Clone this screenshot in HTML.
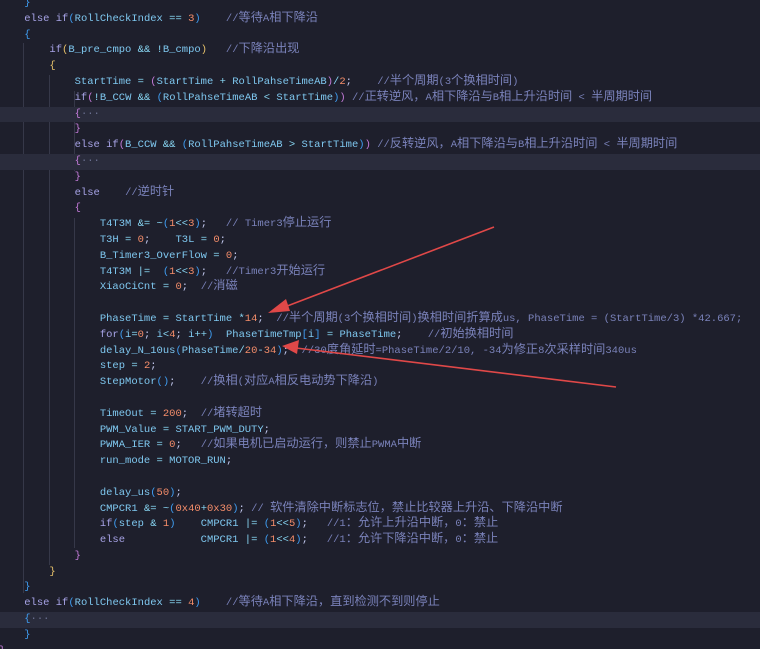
<!DOCTYPE html>
<html><head><meta charset="utf-8"><style>
html,body{margin:0;padding:0;background:#1e1f2c;width:760px;height:649px;overflow:hidden;position:relative}
#code{position:absolute;left:-1px;top:-4px;font-family:"Liberation Mono","Noto Sans CJK SC",monospace;font-size:10.5px;line-height:15.8px;color:#7fc8f0}
.l{height:15.8px;white-space:pre}
.hl{background:#2a2c3c;width:800px;margin-left:0}
.k{color:#a7a3e6}.o{color:#89d8f5}.n{color:#f48d6a}.c{color:#7a82ba}.p{color:#c2c8ee}
.b1{color:#3f9cf0}.b2{color:#e5c06a}.b3{color:#c27ad8}.d{color:#6b7090}
.z{font-size:12.2px;line-height:10px}
.g{position:absolute;width:1px;background:#363849}
</style></head><body>
<div class="g" style="left:23px;top:43px;height:550px"></div>
<div class="g" style="left:49px;top:75px;height:490px"></div>
<div class="g" style="left:74px;top:91px;height:80px"></div>
<div class="g" style="left:74px;top:218px;height:330px"></div>
<div id="code"><div class="l">    <span class="b1">}</span></div><div class="l">    <span class="k">else if</span><span class="b1">(</span>RollCheckIndex <span class="o">==</span> <span class="n">3</span><span class="b1">)</span>    <span class="c">//<span class="z">等待</span>A<span class="z">相下降沿</span></span></div><div class="l">    <span class="b1">{</span></div><div class="l">        <span class="k">if</span><span class="b2">(</span>B_pre_cmpo <span class="o">&amp;&amp; !</span>B_cmpo<span class="b2">)</span>   <span class="c">//<span class="z">下降沿出现</span></span></div><div class="l">        <span class="b2">{</span></div><div class="l">            StartTime <span class="o">=</span> <span class="b3">(</span>StartTime <span class="o">+</span> RollPahseTimeAB<span class="b3">)</span><span class="o">/</span><span class="n">2</span><span class="p">;</span>    <span class="c">//<span class="z">半个周期</span>(3<span class="z">个换相时间</span>)</span></div><div class="l">            <span class="k">if</span><span class="b3">(</span><span class="o">!</span>B_CCW <span class="o">&amp;&amp;</span> <span class="b1">(</span>RollPahseTimeAB <span class="o">&lt;</span> StartTime<span class="b1">)</span><span class="b3">)</span> <span class="c">//<span class="z">正转逆风，</span>A<span class="z">相下降沿与</span>B<span class="z">相上升沿时间</span> &lt; <span class="z">半周期时间</span></span></div><div class="l hl">            <span class="b3">{</span><span class="d">···</span></div><div class="l">            <span class="b3">}</span></div><div class="l">            <span class="k">else if</span><span class="b3">(</span>B_CCW <span class="o">&amp;&amp;</span> <span class="b1">(</span>RollPahseTimeAB <span class="o">&gt;</span> StartTime<span class="b1">)</span><span class="b3">)</span> <span class="c">//<span class="z">反转逆风，</span>A<span class="z">相下降沿与</span>B<span class="z">相上升沿时间</span> &lt; <span class="z">半周期时间</span></span></div><div class="l hl">            <span class="b3">{</span><span class="d">···</span></div><div class="l">            <span class="b3">}</span></div><div class="l">            <span class="k">else</span>    <span class="c">//<span class="z">逆时针</span></span></div><div class="l">            <span class="b3">{</span></div><div class="l">                T4T3M <span class="o">&amp;= ~</span><span class="b1">(</span><span class="n">1</span><span class="o">&lt;&lt;</span><span class="n">3</span><span class="b1">)</span><span class="p">;</span>   <span class="c">// Timer3<span class="z">停止运行</span></span></div><div class="l">                T3H <span class="o">=</span> <span class="n">0</span><span class="p">;</span>    T3L <span class="o">=</span> <span class="n">0</span><span class="p">;</span></div><div class="l">                B_Timer3_OverFlow <span class="o">=</span> <span class="n">0</span><span class="p">;</span></div><div class="l">                T4T3M <span class="o">|=</span>  <span class="b1">(</span><span class="n">1</span><span class="o">&lt;&lt;</span><span class="n">3</span><span class="b1">)</span><span class="p">;</span>   <span class="c">//Timer3<span class="z">开始运行</span></span></div><div class="l">                XiaoCiCnt <span class="o">=</span> <span class="n">0</span><span class="p">;</span>  <span class="c">//<span class="z">消磁</span></span></div><div class="l"> </div><div class="l">                PhaseTime <span class="o">=</span> StartTime <span class="o">*</span><span class="n">14</span><span class="p">;</span>  <span class="c">//<span class="z">半个周期</span>(3<span class="z">个换相时间</span>)<span class="z">换相时间折算成</span>us, PhaseTime = (StartTime/3) *42.667;</span></div><div class="l">                <span class="k">for</span><span class="b1">(</span>i<span class="o">=</span><span class="n">0</span><span class="p">;</span> i<span class="o">&lt;</span><span class="n">4</span><span class="p">;</span> i<span class="o">++</span><span class="b1">)</span>  PhaseTimeTmp<span class="b1">[</span>i<span class="b1">]</span> <span class="o">=</span> PhaseTime<span class="p">;</span>    <span class="c">//<span class="z">初始换相时间</span></span></div><div class="l">                delay_N_10us<span class="b1">(</span>PhaseTime<span class="o">/</span><span class="n">20</span><span class="o">-</span><span class="n">34</span><span class="b1">)</span><span class="p">;</span>  <span class="c">//30<span class="z">度角延时</span>=PhaseTime/2/10, -34<span class="z">为修正</span>8<span class="z">次采样时间</span>340us</span></div><div class="l">                step <span class="o">=</span> <span class="n">2</span><span class="p">;</span></div><div class="l">                StepMotor<span class="b1">()</span><span class="p">;</span>    <span class="c">//<span class="z">换相</span>(<span class="z">对应</span>A<span class="z">相反电动势下降沿</span>)</span></div><div class="l"> </div><div class="l">                TimeOut <span class="o">=</span> <span class="n">200</span><span class="p">;</span>  <span class="c">//<span class="z">堵转超时</span></span></div><div class="l">                PWM_Value <span class="o">=</span> START_PWM_DUTY<span class="p">;</span></div><div class="l">                PWMA_IER <span class="o">=</span> <span class="n">0</span><span class="p">;</span>   <span class="c">//<span class="z">如果电机已启动运行，则禁止</span>PWMA<span class="z">中断</span></span></div><div class="l">                run_mode <span class="o">=</span> MOTOR_RUN<span class="p">;</span></div><div class="l"> </div><div class="l">                delay_us<span class="b1">(</span><span class="n">50</span><span class="b1">)</span><span class="p">;</span></div><div class="l">                CMPCR1 <span class="o">&amp;= ~</span><span class="b1">(</span><span class="n">0x40</span><span class="o">+</span><span class="n">0x30</span><span class="b1">)</span><span class="p">;</span> <span class="c">// <span class="z">软件清除中断标志位，禁止比较器上升沿、下降沿中断</span></span></div><div class="l">                <span class="k">if</span><span class="b1">(</span>step <span class="o">&amp;</span> <span class="n">1</span><span class="b1">)</span>    CMPCR1 <span class="o">|=</span> <span class="b1">(</span><span class="n">1</span><span class="o">&lt;&lt;</span><span class="n">5</span><span class="b1">)</span><span class="p">;</span>   <span class="c">//1<span class="z">：允许上升沿中断，</span>0<span class="z">：禁止</span></span></div><div class="l">                <span class="k">else</span>            CMPCR1 <span class="o">|=</span> <span class="b1">(</span><span class="n">1</span><span class="o">&lt;&lt;</span><span class="n">4</span><span class="b1">)</span><span class="p">;</span>   <span class="c">//1<span class="z">：允许下降沿中断，</span>0<span class="z">：禁止</span></span></div><div class="l">            <span class="b3">}</span></div><div class="l">        <span class="b2">}</span></div><div class="l">    <span class="b1">}</span></div><div class="l">    <span class="k">else if</span><span class="b1">(</span>RollCheckIndex <span class="o">==</span> <span class="n">4</span><span class="b1">)</span>    <span class="c">//<span class="z">等待</span>A<span class="z">相下降沿，直到检测不到则停止</span></span></div><div class="l hl">    <span class="b1">{</span><span class="d">···</span></div><div class="l">    <span class="b1">}</span></div><div class="l"><span class="b3">}</span></div></div>
<svg width="760" height="649" style="position:absolute;left:0;top:0">
<line x1="494" y1="227" x2="282" y2="308" stroke="#e04848" stroke-width="1.6"/>
<polygon points="268,313 286,299 290,311" fill="#e04848"/>
<line x1="616" y1="387" x2="296" y2="348" stroke="#e04848" stroke-width="1.6"/>
<polygon points="282,346 299,340 297,354" fill="#e04848"/>
</svg>
</body></html>
